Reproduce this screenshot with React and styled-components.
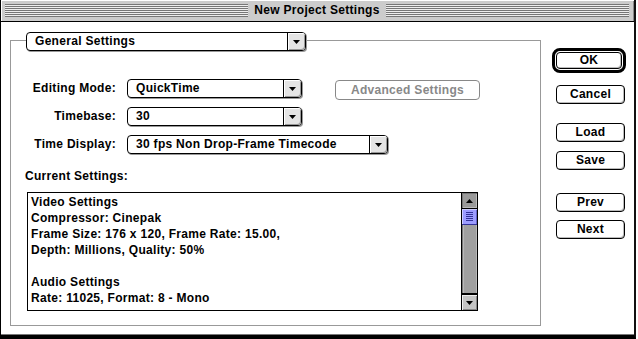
import React from "react";
import styled, { createGlobalStyle } from "styled-components";

const GlobalStyle = createGlobalStyle`
  html, body {
    margin: 0;
    padding: 0;
    background: #fff;
  }
  body {
    font-family: "Liberation Sans", Arial, sans-serif;
    font-size: 12px;
    font-weight: bold;
    letter-spacing: 0.3px;
    color: #000;
  }
`;

const Window = styled.div`
  width: 636px;
  height: 339px;
  box-sizing: border-box;
  border-left: 1px solid #000;
  border-right: 2px solid #111;
  border-bottom: 4px solid #000;
  display: flex;
  flex-direction: column;
  background: #fff;
`;

const TitleBar = styled.div`
  height: 22px;
  box-sizing: border-box;
  border-bottom: 1px solid #000;
  background: #cccccc;
  box-shadow: inset 1px 1px 0 #fff, inset -1px 0 0 #888;
  display: flex;
  align-items: flex-start;
  padding: 4px 5px 0 4px;
  gap: 6px;
`;

const Stripes = styled.div`
  flex: 1;
  height: 13px;
  background: repeating-linear-gradient(
    to bottom,
    #777 0px,
    #777 1px,
    #eeeeee 1px,
    #eeeeee 2px
  );
`;

const Title = styled.div`
  line-height: 13px;
  white-space: nowrap;
`;

const Body = styled.div`
  flex: 1;
  display: flex;
  padding: 18px 0 0 9px;
  border-bottom: 1px solid #777;
`;

const GroupBox = styled.div`
  width: 531px;
  height: 286px;
  box-sizing: border-box;
  border: 1px solid #999;
`;

const Popup = styled.div`
  width: ${(p) => p.$w}px;
  height: 19px;
  box-sizing: border-box;
  border: 1px solid #000;
  border-radius: 4px;
  box-shadow: 1px 1px 0 #999;
  background: #fff;
  display: flex;
  align-items: stretch;
  flex-shrink: 0;
`;

const GroupPopup = styled(Popup)`
  margin: -9px 0 0 15px;
`;

const PopupText = styled.span`
  flex: 1;
  padding-left: 8px;
  line-height: 17px;
  white-space: nowrap;
  overflow: hidden;
`;

const PopupArrow = styled.span`
  width: 17px;
  border-left: 1px solid #000;
  border-radius: 0 3px 3px 0;
  background: #e4e4e4;
  box-shadow: inset 1px 1px 0 #fff, inset -1px -1px 0 #999;
  display: flex;
  align-items: center;
  justify-content: center;
`;

const Form = styled.div`
  margin-top: 28px;
  display: flex;
  flex-direction: column;
  gap: 8px;
`;

const Row = styled.div`
  display: flex;
  align-items: flex-start;
  height: 20px;
`;

const Label = styled.div`
  width: 105px;
  margin-right: 11px;
  text-align: right;
  line-height: 19px;
  white-space: nowrap;
`;

const DisabledButton = styled.div`
  margin-left: 33px;
  margin-top: 1px;
  width: 145px;
  height: 20px;
  box-sizing: border-box;
  border: 1px solid #888;
  border-radius: 4px;
  color: #888;
  text-align: center;
  line-height: 18px;
`;

const SectionLabel = styled.div`
  margin-top: 13px;
  padding-left: 14px;
  line-height: 16px;
`;

const TextBox = styled.div`
  margin: 8px 0 0 16px;
  width: 451px;
  height: 119px;
  box-sizing: border-box;
  border: 1px solid #000;
  display: flex;
`;

const TextContent = styled.div`
  flex: 1;
  padding: 1px 3px;
  line-height: 16px;
  white-space: nowrap;
  overflow: hidden;
`;

const Line = styled.div`
  height: 16px;
`;

const ScrollBar = styled.div`
  width: 15px;
  border-left: 1px solid #000;
  display: flex;
  flex-direction: column;
`;

const ScrollArrow = styled.div`
  height: 16px;
  box-sizing: border-box;
  background: ${(p) => (p.$dark ? "#9a9a9a" : "#c4c4c4")};
  box-shadow: inset 1px 1px 0 ${(p) => (p.$dark ? "#777" : "#eee")},
    inset -1px -1px 0 ${(p) => (p.$dark ? "#bbb" : "#888")};
  border-${(p) => (p.$up ? "bottom" : "top")}: 1px solid #000;
  display: flex;
  align-items: center;
  justify-content: center;
`;

const Thumb = styled.div`
  height: 16px;
  box-sizing: border-box;
  background: #9c9cff;
  border-bottom: 1px solid #333399;
  box-shadow: inset 1px 1px 0 #ccccff, inset -1px 0 0 #6666cc;
  display: flex;
  align-items: center;
  justify-content: center;
`;

const Grip = styled.div`
  width: 7px;
  height: 9px;
  background: repeating-linear-gradient(
    to bottom,
    #333399 0px,
    #333399 1px,
    transparent 1px,
    transparent 2px
  );
`;

const Track = styled.div`
  flex: 1;
  background: #a0a0a0;
  box-shadow: inset 1px 0 0 #777, inset 2px 0 0 #b8b8b8, inset -1px 0 0 #b8b8b8;
  border-bottom: 1px solid #000;
`;

const ButtonColumn = styled.div`
  margin-left: 11px;
  padding-top: 8px;
  display: flex;
  flex-direction: column;
`;

const DefaultRing = styled.div`
  width: 74px;
  height: 25px;
  box-sizing: border-box;
  border: 3px solid #000;
  border-radius: 8px;
  padding: 1px;
  display: flex;
`;

const Button = styled.div`
  width: ${(p) => (p.$fill ? "100%" : "69px")};
  height: ${(p) => (p.$fill ? "100%" : "19px")};
  margin-left: ${(p) => (p.$fill ? 0 : 4)}px;
  margin-top: ${(p) => p.$gap || 0}px;
  box-sizing: border-box;
  border: 1px solid #000;
  border-radius: 4px;
  background: #fff;
  box-shadow: inset -1px -1px 0 #bbb;
  text-align: center;
  line-height: ${(p) => (p.$fill ? "15px" : "17px")};
`;

function Arrow({ up }) {
  return (
    <svg width="7" height="4" viewBox="0 0 7 4">
      <path d={up ? "M3.5 0 L7 4 L0 4 Z" : "M0 0 L7 0 L3.5 4 Z"} fill="#000" />
    </svg>
  );
}

function PopupMenu({ width, value, as: Comp = Popup }) {
  return (
    <Comp $w={width}>
      <PopupText>{value}</PopupText>
      <PopupArrow>
        <Arrow />
      </PopupArrow>
    </Comp>
  );
}

const lines = [
  "Video Settings",
  "Compressor: Cinepak",
  "Frame Size: 176 x 120, Frame Rate: 15.00,",
  "Depth: Millions, Quality: 50%",
  "",
  "Audio Settings",
  "Rate: 11025, Format: 8 - Mono",
];

export default function App() {
  return (
    <>
      <GlobalStyle />
      <Window>
        <TitleBar>
          <Stripes />
          <Title>New Project Settings</Title>
          <Stripes />
        </TitleBar>
        <Body>
          <GroupBox>
            <PopupMenu as={GroupPopup} width={280} value="General Settings" />
            <Form>
              <Row>
                <Label>Editing Mode:</Label>
                <PopupMenu width={175} value="QuickTime" />
                <DisabledButton>Advanced Settings</DisabledButton>
              </Row>
              <Row>
                <Label>Timebase:</Label>
                <PopupMenu width={175} value="30" />
              </Row>
              <Row>
                <Label>Time Display:</Label>
                <PopupMenu width={261} value="30 fps Non Drop-Frame Timecode" />
              </Row>
            </Form>
            <SectionLabel>Current Settings:</SectionLabel>
            <TextBox>
              <TextContent>
                {lines.map((l, i) => (
                  <Line key={i}>{l}</Line>
                ))}
              </TextContent>
              <ScrollBar>
                <ScrollArrow $up $dark>
                  <Arrow up />
                </ScrollArrow>
                <Thumb>
                  <Grip />
                </Thumb>
                <Track />
                <ScrollArrow>
                  <Arrow />
                </ScrollArrow>
              </ScrollBar>
            </TextBox>
          </GroupBox>
          <ButtonColumn>
            <DefaultRing>
              <Button $fill>OK</Button>
            </DefaultRing>
            <Button $gap={12}>Cancel</Button>
            <Button $gap={19}>Load</Button>
            <Button $gap={9}>Save</Button>
            <Button $gap={23}>Prev</Button>
            <Button $gap={8}>Next</Button>
          </ButtonColumn>
        </Body>
      </Window>
    </>
  );
}
